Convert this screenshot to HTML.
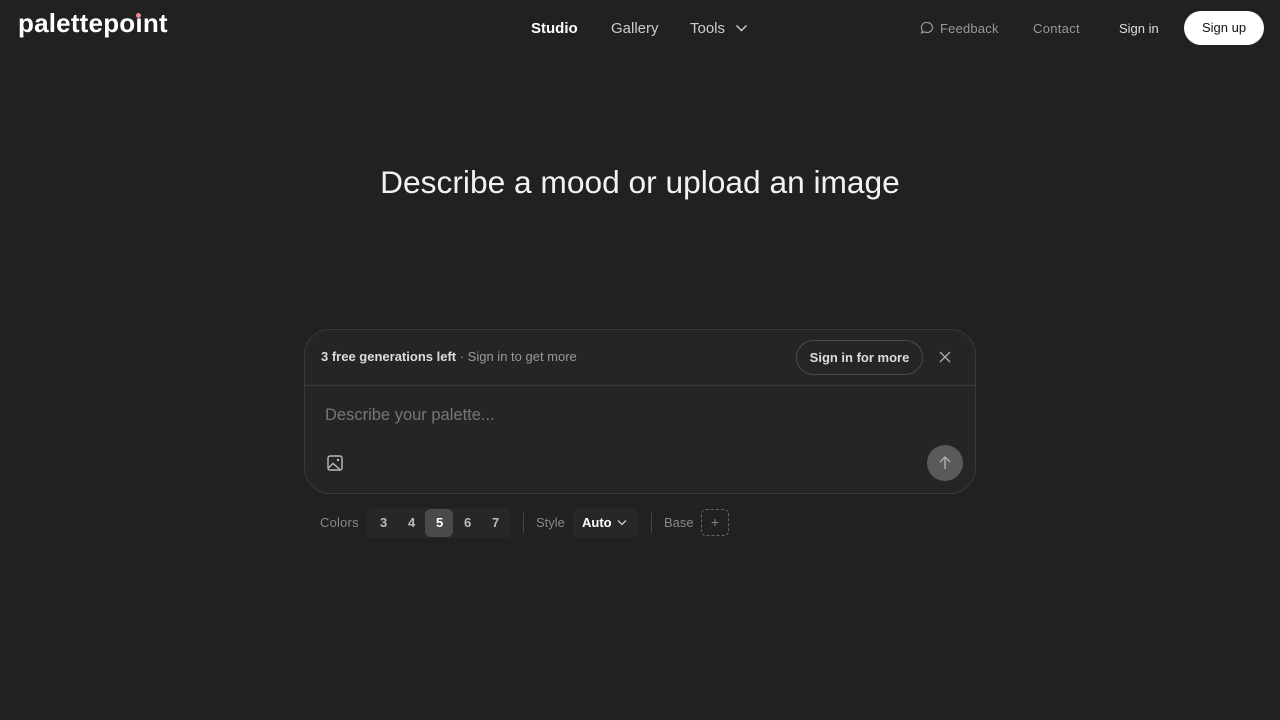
<!DOCTYPE html>
<html><head><meta charset="utf-8"><style>
*{box-sizing:border-box;margin:0;padding:0}
body{width:1280px;height:720px;background:#212121;font-family:"Liberation Sans",sans-serif;color:#fff;position:relative;overflow:hidden}
.a{position:absolute;white-space:nowrap}
.nav{position:absolute;top:0;left:0;width:1280px;height:57px;border-bottom:1px solid #262626}
</style></head><body>
<div class="nav"></div>
<div class="a" style="left:18px;top:8px;font-size:26px;font-weight:bold;letter-spacing:0.2px">palettepo<span style="position:relative">ı<span style="position:absolute;left:1px;top:5px;width:5px;height:5px;border-radius:50%;background:#e58a8a"></span></span>nt</div>
<div class="a" style="left:531px;top:20px;font-size:15px;font-weight:bold">Studio</div>
<div class="a" style="left:611px;top:20px;font-size:15px;color:#ccc">Gallery</div>
<div class="a" style="left:690px;top:20px;font-size:15px;color:#ccc">Tools</div>
<svg class="a" style="left:735px;top:23px" width="13" height="10" viewBox="0 0 13 10"><path d="M1.5 2.5l5 5 5-5" stroke="#ccc" stroke-width="1.5" fill="none"/></svg>
<svg class="a" style="left:920px;top:21px" width="14" height="14" viewBox="0 0 14 14"><path d="M7 1.5a5.5 5 0 1 1-2.8 9.3L1.5 12l.9-2.6A5 5 0 0 1 7 1.5z" stroke="#999" stroke-width="1.2" fill="none"/></svg>
<div class="a" style="left:940px;top:21px;font-size:13px;color:#999;letter-spacing:0.2px">Feedback</div>
<div class="a" style="left:1033px;top:21px;font-size:13px;color:#999;letter-spacing:0.3px">Contact</div>
<div class="a" style="left:1119px;top:21px;font-size:13px;color:#ddd">Sign in</div>
<div class="a" style="left:1184px;top:11px;width:80px;height:34px;border-radius:17px;background:#fff;color:#111;font-size:13px;text-align:center;line-height:34px">Sign up</div>
<div class="a" style="left:0;width:1280px;text-align:center;top:164px;font-size:31.7px;color:#f2f2f2">Describe a mood or upload an image</div>
<div class="a" style="left:304px;top:329px;width:672px;height:165px;border:1px solid #3a3a3a;border-radius:26px;background:#252525"></div>
<div class="a" style="left:305px;top:385px;width:670px;height:1px;background:#3a3a3a"></div>
<div class="a" style="left:321px;top:349px;font-size:13px;color:#ddd"><b>3 free generations left</b> <span style="color:#999">· Sign in to get more</span></div>
<div class="a" style="left:796px;top:340px;width:127px;height:35px;border:1px solid #4a4a4a;border-radius:18px;font-size:13px;font-weight:bold;color:#ddd;text-align:center;line-height:33px">Sign in for more</div>
<svg class="a" style="left:938px;top:350px" width="14" height="14" viewBox="0 0 14 14"><path d="M2 2l10 10M12 2L2 12" stroke="#aaa" stroke-width="1.4"/></svg>
<div class="a" style="left:325px;top:406px;font-size:16.5px;color:#777">Describe your palette...</div>
<svg class="a" style="left:326px;top:454px" width="18" height="18" viewBox="0 0 18 18"><rect x="2" y="2" width="14" height="14" rx="2" stroke="#bbb" stroke-width="1.4" fill="none"/><path d="M2.5 14l4.5-4.5 7 6" stroke="#bbb" stroke-width="1.4" fill="none"/><circle cx="12" cy="6" r="1.2" fill="#bbb"/></svg>
<div class="a" style="left:927px;top:445px;width:36px;height:36px;border-radius:50%;background:#5a5a5a"></div>
<svg class="a" style="left:936px;top:454px" width="18" height="18" viewBox="0 0 18 18"><path d="M9 15V3M4 8l5-5 5 5" stroke="#aaa" stroke-width="1.5" fill="none"/></svg>
<div class="a" style="left:320px;top:515px;font-size:13px;color:#888;letter-spacing:0.2px">Colors</div>
<div class="a" style="left:367px;top:508px;width:144px;height:30px;border-radius:6px;background:#272727"></div>
<div class="a" style="left:425px;top:509px;width:28px;height:28px;border-radius:6px;background:#4a4a4a"></div>
<div class="a" style="left:380px;top:515px;font-size:13px;font-weight:bold;color:#bbb">3</div>
<div class="a" style="left:408px;top:515px;font-size:13px;font-weight:bold;color:#bbb">4</div>
<div class="a" style="left:436px;top:515px;font-size:13px;font-weight:bold;color:#fff">5</div>
<div class="a" style="left:464px;top:515px;font-size:13px;font-weight:bold;color:#bbb">6</div>
<div class="a" style="left:492px;top:515px;font-size:13px;font-weight:bold;color:#bbb">7</div>
<div class="a" style="left:523px;top:513px;width:1px;height:20px;background:#444"></div>
<div class="a" style="left:536px;top:515px;font-size:13px;color:#888">Style</div>
<div class="a" style="left:573px;top:508px;width:65px;height:30px;border-radius:6px;background:#272727"></div>
<div class="a" style="left:582px;top:515px;font-size:13px;font-weight:bold;color:#fff">Auto</div>
<svg class="a" style="left:616px;top:518px" width="12" height="9" viewBox="0 0 12 9"><path d="M2 2.5l4 4 4-4" stroke="#ccc" stroke-width="1.3" fill="none"/></svg>
<div class="a" style="left:651px;top:513px;width:1px;height:20px;background:#444"></div>
<div class="a" style="left:664px;top:515px;font-size:13px;color:#888">Base</div>
<div class="a" style="left:701px;top:509px;width:28px;height:27px;border:1px dashed #666;border-radius:5px;color:#888;font-size:14px;text-align:center;line-height:25px">+</div>
</body></html>
